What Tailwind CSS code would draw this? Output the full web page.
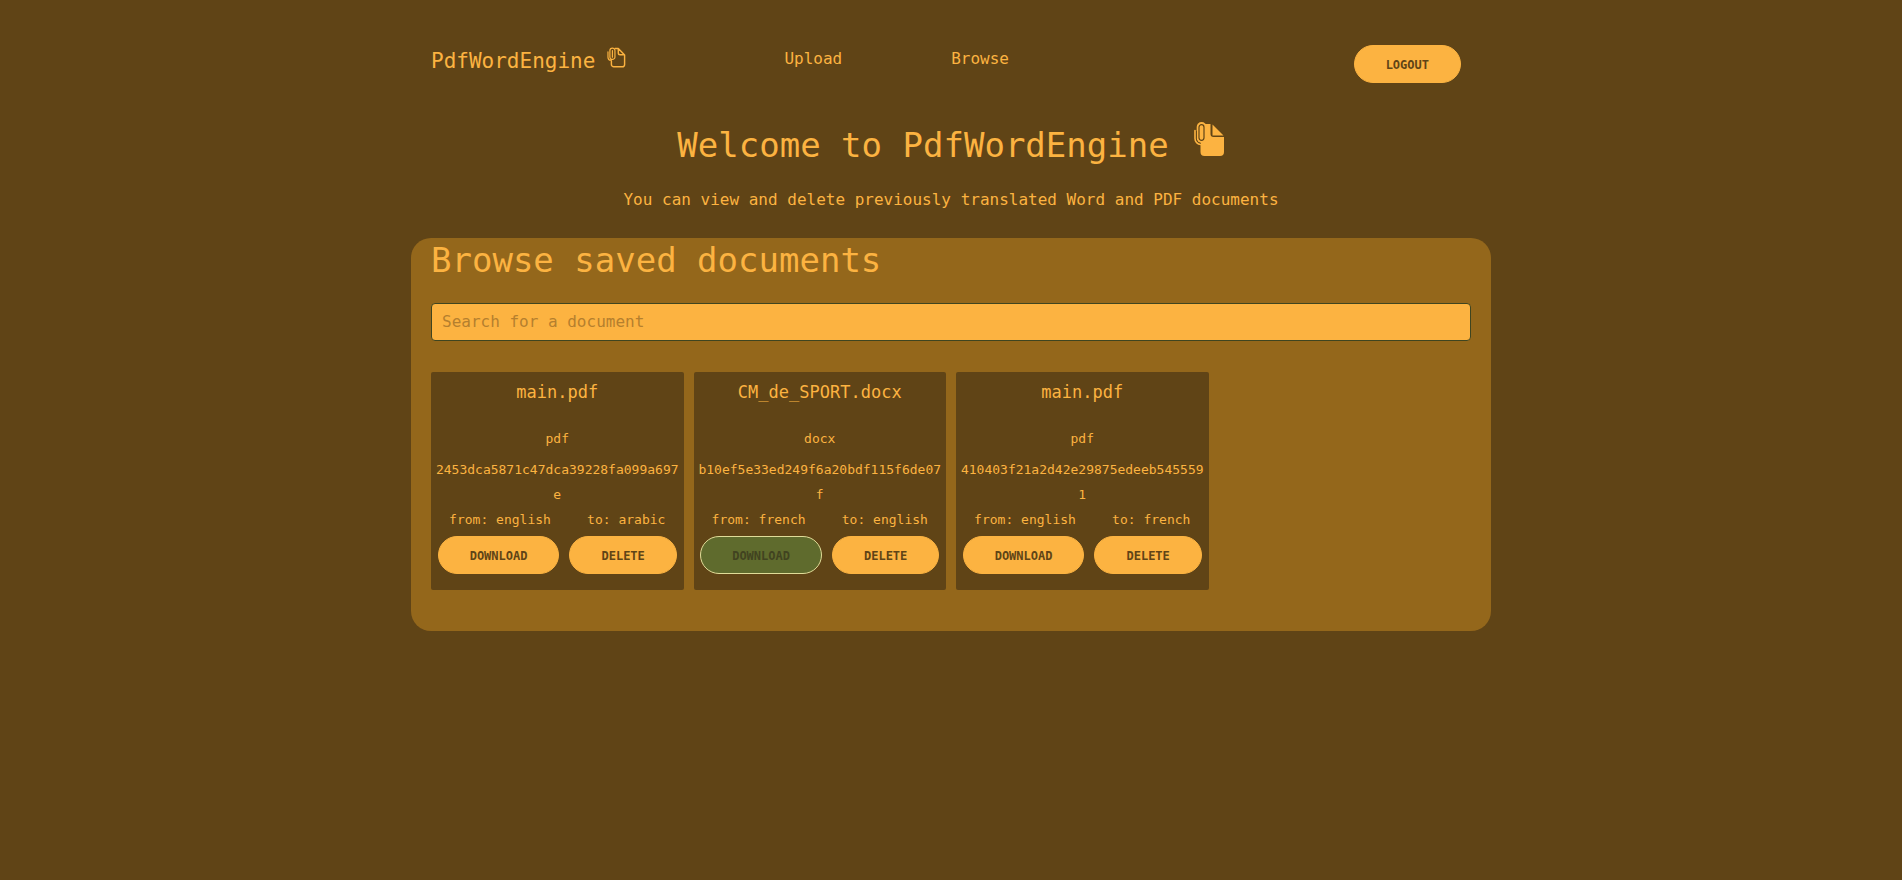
<!DOCTYPE html>
<html lang="en">
<head>
<meta charset="utf-8">
<meta name="viewport" content="width=device-width, initial-scale=1">
<title>PdfWordEngine</title>
<script src="https://cdn.jsdelivr.net/npm/@tailwindcss/browser@4"></script>
</head>
<body class="min-h-screen bg-[#604416] font-['DejaVu_Sans_Mono',monospace] text-[#fcb341]">
<div class="mx-auto max-w-[1080px]">
  <header class="flex items-start pt-[45px] pr-[30px] pl-5">
    <a href="#" class="flex items-start gap-3 pt-[2px] text-[21px] leading-7">
      PdfWordEngine
      <svg class="h-[21px] w-[19px]" viewBox="0 0 31 35" fill="none" stroke="currentColor" stroke-width="2.4" stroke-linecap="round" stroke-linejoin="round" aria-hidden="true">
        <path d="M13 2.500h5.500L29 13.500V29a4 4 0 0 1-4 4H11a4 4 0 0 1-4-4V23M18.500 3v7a3 3 0 0 0 3 3H28.500"/>
        <path stroke-width="2" d="M1.300 8v9a5.500 5.500 0 0 0 4 5.300M4.500 6a4.200 4.200 0 0 1 8.400 0V16.500a4.200 4.200 0 0 1-8.400 0zM8.700 6v11"/>
      </svg>
    </a>
    <nav class="ml-[158px] flex gap-[109px] pt-[2px] text-base leading-6">
      <a href="#">Upload</a>
      <a href="#">Browse</a>
    </nav>
    <button type="button" class="ml-auto h-[38px] rounded-full border border-[#fcb341] bg-[#fcb341] px-[31px] pt-[2px] text-xs font-bold text-[#604416]">LOGOUT</button>
  </header>

  <main>
    <h1 class="mt-[39px] flex items-start justify-center gap-[25px] text-[34px] leading-10">
      <span class="pt-[3px]">Welcome to PdfWordEngine</span>
      <svg class="h-[35px] w-[31px]" viewBox="0 0 31 35" fill="none" aria-hidden="true">
        <path fill="currentColor" d="M9 2h7.500V12a3 3 0 0 0 3 3H30V30a4 4 0 0 1-4 4H10.500a4 4 0 0 1-4-4V19z"/>
        <path fill="currentColor" d="M18.500 2.500 29.500 13.500h-11z"/>
        <rect x="2.700" y="0" width="9.800" height="21" rx="4.900" fill="currentColor"/>
        <rect x="5" y="2.700" width="5" height="15.600" rx="2.500" stroke="#604416" stroke-width="1.200"/>
        <path stroke="#604416" stroke-width="1" d="M2.300 9v7.500a5 5 0 0 0 4.700 5"/>
        <path stroke="currentColor" stroke-width="1.600" stroke-linecap="round" d="M1 8.500V16.500a6 6 0 0 0 5.700 6"/>
      </svg>
    </h1>
    <p class="mt-[23px] text-center text-base leading-6">You can view and delete previously translated Word and PDF documents</p>

    <section class="mt-[26px] rounded-[20px] bg-[#94671b] px-5 pt-[2px] pb-[41px]">
      <h2 class="text-[34px] leading-10">Browse saved documents</h2>
      <input type="search" aria-label="Search for a document" placeholder="Search for a document" class="mt-[23px] block h-[38px] w-full rounded-sm border border-[#3f4520] bg-[#fcb341] px-[10px] pb-[2px] text-base text-[#604416] placeholder:text-[#b57f2e]">

      <div class="mt-[31px] grid grid-cols-4 gap-[10px]">
        <article class="rounded-xs bg-[#604416] pt-2 pb-4 text-center text-[13px] leading-[25px]">
          <h3 class="text-[17px] leading-6">main.pdf</h3>
          <p class="mt-[22px]">pdf</p>
          <p class="mt-[6px] px-1 break-all">2453dca5871c47dca39228fa099a697e</p>
          <div class="flex justify-around"><span>from: english</span><span>to: arabic</span></div>
          <div class="mt-1 flex justify-center gap-[10px]">
            <button type="button" class="h-[38px] rounded-full border border-[#fcb341] bg-[#fcb341] px-[31px] pt-[2px] text-xs font-bold text-[#604416]">DOWNLOAD</button>
            <button type="button" class="h-[38px] rounded-full border border-[#fcb341] bg-[#fcb341] px-[31px] pt-[2px] text-xs font-bold text-[#604416]">DELETE</button>
          </div>
        </article>
        <article class="rounded-xs bg-[#604416] pt-2 pb-4 text-center text-[13px] leading-[25px]">
          <h3 class="text-[17px] leading-6">CM_de_SPORT.docx</h3>
          <p class="mt-[22px]">docx</p>
          <p class="mt-[6px] px-1 break-all">b10ef5e33ed249f6a20bdf115f6de07f</p>
          <div class="flex justify-around"><span>from: french</span><span>to: english</span></div>
          <div class="mt-1 flex justify-center gap-[10px]">
            <button type="button" class="h-[38px] rounded-full border border-[#e0dc98] bg-[#5f6b2d] px-[31px] pt-[2px] text-xs font-bold text-[#414320]">DOWNLOAD</button>
            <button type="button" class="h-[38px] rounded-full border border-[#fcb341] bg-[#fcb341] px-[31px] pt-[2px] text-xs font-bold text-[#604416]">DELETE</button>
          </div>
        </article>
        <article class="rounded-xs bg-[#604416] pt-2 pb-4 text-center text-[13px] leading-[25px]">
          <h3 class="text-[17px] leading-6">main.pdf</h3>
          <p class="mt-[22px]">pdf</p>
          <p class="mt-[6px] px-1 break-all">410403f21a2d42e29875edeeb5455591</p>
          <div class="flex justify-around"><span>from: english</span><span>to: french</span></div>
          <div class="mt-1 flex justify-center gap-[10px]">
            <button type="button" class="h-[38px] rounded-full border border-[#fcb341] bg-[#fcb341] px-[31px] pt-[2px] text-xs font-bold text-[#604416]">DOWNLOAD</button>
            <button type="button" class="h-[38px] rounded-full border border-[#fcb341] bg-[#fcb341] px-[31px] pt-[2px] text-xs font-bold text-[#604416]">DELETE</button>
          </div>
        </article>
      </div>
    </section>
  </main>
</div>
</body>
</html>
